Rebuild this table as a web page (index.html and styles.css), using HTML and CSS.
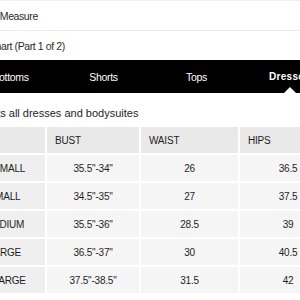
FILE: index.html
```html
<!DOCTYPE html>
<html>
<head>
<meta charset="utf-8">
<link rel="stylesheet" href="styles.css">
</head>
<body>
<div class="page">
  <div class="link-row first">How to Measure</div>
  <div class="link-row">Size Chart (Part 1 of 2)</div>
  <nav class="tabs">
    <div class="tab">Bottoms</div>
    <div class="tab">Shorts</div>
    <div class="tab">Tops</div>
    <div class="tab active">Dresses</div>
  </nav>
  <p class="subtitle">Fits all dresses and bodysuites</p>
  <div class="chart">
    <div class="cell head"></div>
    <div class="cell head">BUST</div>
    <div class="cell head">WAIST</div>
    <div class="cell head">HIPS</div>

    <div class="cell label">X-SMALL</div>
    <div class="cell val">35.5"-34"</div>
    <div class="cell val">26</div>
    <div class="cell val">36.5</div>

    <div class="cell label">SMALL</div>
    <div class="cell val">34.5"-35"</div>
    <div class="cell val">27</div>
    <div class="cell val">37.5</div>

    <div class="cell label">MEDIUM</div>
    <div class="cell val">35.5"-36"</div>
    <div class="cell val">28.5</div>
    <div class="cell val">39</div>

    <div class="cell label">LARGE</div>
    <div class="cell val">36.5"-37"</div>
    <div class="cell val">30</div>
    <div class="cell val">40.5</div>

    <div class="cell label">X-LARGE</div>
    <div class="cell val">37.5"-38.5"</div>
    <div class="cell val">31.5</div>
    <div class="cell val">42</div>
  </div>
</div>
</body>
</html>
```

FILE: styles.css
```css
html, body {
  margin: 0;
  padding: 0;
  background: #fff;
  overflow: hidden;
}
body {
  font-family: "Liberation Sans", Arial, sans-serif;
  color: #333;
}
.page {
  width: 372px;
  margin-left: -36px;
}
.link-row {
  height: 29px;
  display: flex;
  align-items: center;
  padding-left: 3px;
  font-size: 10.5px;
  letter-spacing: -0.4px;
  color: #2b2b2b;
  border-bottom: 1px solid #ececec;
}
.link-row.first {
  border-top: 1px solid #f0f0f0;
}
.tabs {
  background: #000;
  height: 33px;
  display: grid;
  grid-template-columns: repeat(4, 1fr);
  margin-top: -1px;
}
.tab {
  position: relative;
  display: flex;
  align-items: center;
  justify-content: center;
  color: #fff;
  font-size: 10.5px;
  letter-spacing: -0.3px;
}
.tab.active {
  font-weight: bold;
  font-size: 10px;
  letter-spacing: 0.3px;
}
.tab.active::after {
  content: "";
  position: absolute;
  bottom: 0;
  left: 50%;
  margin-left: -6px;
  border-left: 6px solid transparent;
  border-right: 6px solid transparent;
  border-bottom: 6px solid #fff;
}
.subtitle {
  margin: 0;
  padding: 13px 0 7px 24px;
  font-size: 11px;
  line-height: 14px;
  color: #1e1e1e;
}
.chart {
  display: grid;
  grid-template-columns: 81px 92px 97px 96px;
  grid-auto-rows: 26px;
  gap: 2px;
  font-size: 10px;
  letter-spacing: -0.2px;
  color: #1e1e1e;
}
.cell {
  display: flex;
  align-items: center;
  background: #f5f5f5;
}
.cell.head {
  background: #e9e9e9;
  padding-left: 8px;
}
.cell.label {
  background: #efefef;
  justify-content: center;
}
.cell.val {
  justify-content: center;
}
```
